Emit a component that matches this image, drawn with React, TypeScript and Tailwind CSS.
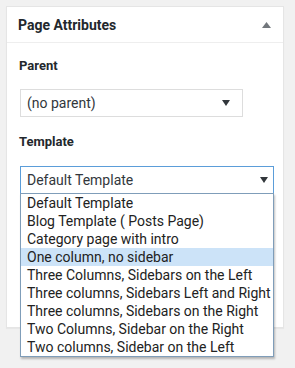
const templates = [
  "Default Template",
  "Blog Template ( Posts Page)",
  "Category page with intro",
  "One column, no sidebar",
  "Three Columns, Sidebars on the Left",
  "Three columns, Sidebars Left and Right",
  "Three columns, Sidebars on the Right",
  "Two Columns, Sidebar on the Right",
  "Two columns, Sidebar on the Left",
];

function Caret() {
  return (
    <svg width="8" height="6" viewBox="0 0 8 6" className="shrink-0">
      <path d="M0 0 L8 0 L4 6 Z" fill="#32373c" />
    </svg>
  );
}

function App() {
  return (
    <div
      className="w-[295px] h-[368px] bg-[#f1f1f1] pt-[6px] pl-[6px] overflow-hidden"
      style={{ fontFamily: "Roboto, 'Liberation Sans', sans-serif" }}
    >
      <div className="w-[278px] h-[322px] bg-white border border-[#e5e5e5] shadow-[0_1px_1px_rgba(0,0,0,0.04)]">
        <div className="h-[36px] flex items-center justify-between pl-[11px] pr-[12px] border-b border-[#eeeeee]">
          <h2 className="text-[14px] font-bold text-[#23282d] leading-none">Page Attributes</h2>
          <svg width="9" height="6" viewBox="0 0 9 6">
            <path d="M0 6 L4.5 0 L9 6 Z" fill="#72777c" />
          </svg>
        </div>
        <div className="px-[12px] pt-[13px]">
          <p className="text-[13px] font-bold text-[#23282d] leading-none mt-[3px]">Parent</p>
          <div className="mt-[17px] ml-px w-[223px] h-[28px] border border-[#dddddd] flex items-center justify-between pl-[6px] pr-[12px] text-[14px] text-[#32373c]">
            <span>(no parent)</span>
            <Caret />
          </div>
          <p className="text-[13px] font-bold text-[#23282d] leading-none mt-[18px]">Template</p>
          <div className="relative mt-[18px] ml-px w-[254px]">
            <div className="h-[28px] border border-[#5b9dd9] flex items-center justify-between pl-[6px] pr-[5px] text-[14px] text-[#32373c]">
              <span>Default Template</span>
              <Caret />
            </div>
            <ul className="absolute left-0 top-[27px] w-[254px] bg-white border border-[#7f9db9] shadow-[1px_2px_2px_rgba(0,0,0,0.25)] text-[14px] text-[#222222]">
              {templates.map((t, i) => (
                <li
                  key={i}
                  className={
                    "h-[18px] leading-[18px] pl-[6px] whitespace-nowrap " +
                    (i === 3 ? "bg-[#cce3f8]" : "")
                  }
                >
                  {t}
                </li>
              ))}
            </ul>
          </div>
        </div>
      </div>
    </div>
  );
}

export default App;
